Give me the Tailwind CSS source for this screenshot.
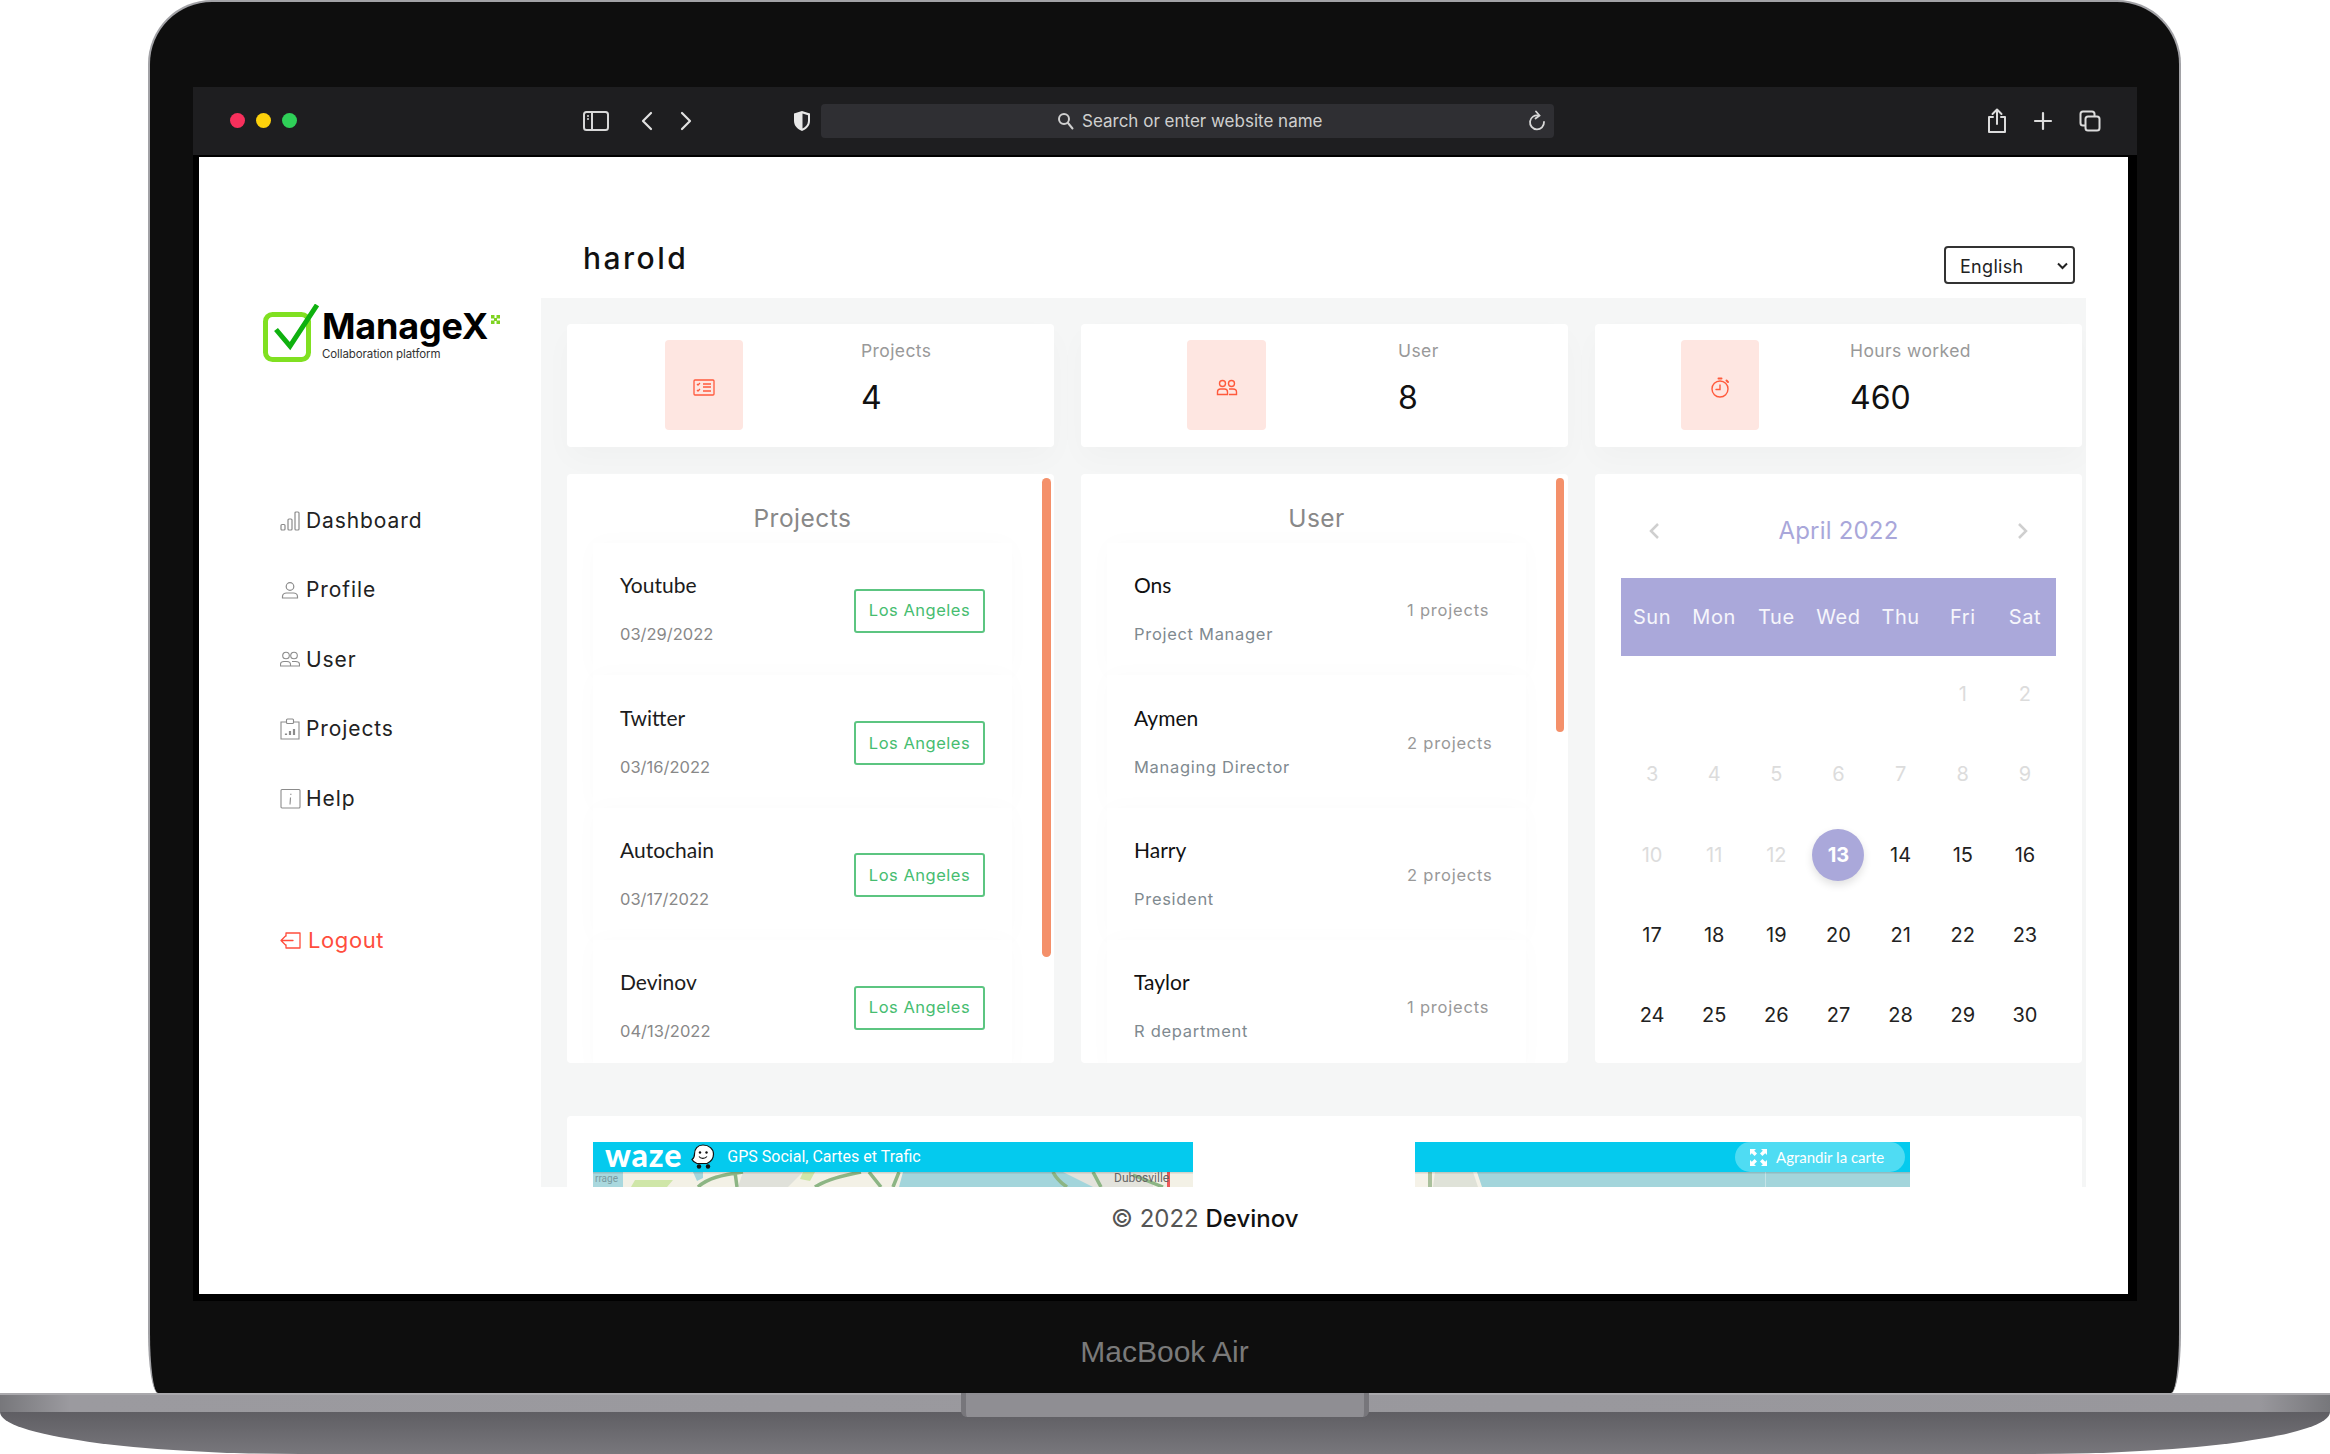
<!DOCTYPE html>
<html lang="en">
<head>
  <meta charset="UTF-8" />
  <title>ManageX</title>
  <script src="https://cdn.jsdelivr.net/npm/@tailwindcss/browser@4"></script>
</head>
<body class="w-[2330px] h-[1454px] overflow-hidden bg-white font-[family-name:Inter,sans-serif]">

  <!-- laptop lid -->
  <div class="ml-[148px] w-[2033px] h-[1393px] pt-[85px] px-[43px] bg-[#0e0e0e] border-2 border-b-0 border-[#a2a2a6] rounded-t-[64px] rounded-b-[10px_60px]">
    <div class="w-[1944px] h-[1214px] bg-black">

      <!-- browser toolbar -->
      <div class="h-[68px] bg-[#1e1e20] flex items-center relative">
        <span class="-mt-[2px] ml-[37px] w-[15px] h-[15px] rounded-full bg-[#f7305c]"></span>
        <span class="-mt-[2px] ml-[11px] w-[15px] h-[15px] rounded-full bg-[#fdd10b]"></span>
        <span class="-mt-[2px] ml-[11px] w-[15px] h-[15px] rounded-full bg-[#2fd058]"></span>

        <svg class="ml-[286px]" width="26" height="20" viewBox="0 0 26 20" fill="none" stroke="#d8d8d8" stroke-width="2"><rect x="1" y="1" width="24" height="18" rx="2.5"/><path d="M9 1v18"/><path d="M4 5h2M4 8h2" stroke-width="1.5"/></svg>
        <svg class="ml-[31px]" width="14" height="20" viewBox="0 0 14 20" fill="none" stroke="#e2e2e2" stroke-width="2.2" stroke-linecap="round" stroke-linejoin="round"><path d="M11 2 3 10l8 8"/></svg>
        <svg class="ml-[25px]" width="14" height="20" viewBox="0 0 14 20" fill="none" stroke="#e2e2e2" stroke-width="2.2" stroke-linecap="round" stroke-linejoin="round"><path d="m3 2 8 8-8 8"/></svg>
        <svg class="ml-[100px]" width="18" height="22" viewBox="0 0 18 22"><path d="M9 1 1 3.5V11c0 5 4 8.500 8 10 4-1.500 8-5 8-10V3.500z" fill="#e8e8e8"/><path d="M9.500 3.500 15 5.200V11c0 3.500-2.500 6-5.500 7.500z" fill="#26262a"/></svg>

        <div class="ml-[10px] w-[733px] h-[34px] rounded-[4px] bg-[#2f2f33] flex items-center relative">
          <svg class="ml-[236px]" width="17" height="18" viewBox="0 0 17 18" fill="none" stroke="#d0d0d0" stroke-width="2" stroke-linecap="round"><circle cx="7" cy="7" r="5"/><path d="m11 11 4.500 5.500"/></svg>
          <span class="ml-[8px] text-[17px] leading-none text-[#cfcfcf]">Search or enter website name</span>
          <svg class="absolute right-[8px] top-[6px]" width="18" height="22" viewBox="0 0 18 22" fill="none" stroke="#d8d8d8" stroke-width="1.800" stroke-linecap="round"><path d="M10.500 5.500A7 7 0 1 0 16 12"/><path d="M8 1.500l3.500 4-4 3" /></svg>
        </div>

        <svg class="ml-[433px]" width="20" height="26" viewBox="0 0 20 26" fill="none" stroke="#dcdcdc" stroke-width="2" stroke-linecap="round" stroke-linejoin="round"><path d="M6 9H2v15h16V9h-4"/><path d="M10 16V2M5.500 6 10 1.500 14.500 6"/></svg>
        <svg class="ml-[26px]" width="20" height="20" viewBox="0 0 20 20" fill="none" stroke="#dcdcdc" stroke-width="2.200" stroke-linecap="round"><path d="M10 2v16M2 10h16"/></svg>
        <svg class="ml-[26px]" width="22" height="22" viewBox="0 0 22 22" fill="none" stroke="#dcdcdc" stroke-width="2"><rect x="1.500" y="1.500" width="14" height="14" rx="2.500"/><rect x="6.500" y="6.500" width="14" height="14" rx="2.500" fill="#1e1e20"/></svg>
      </div>

      <!-- screen -->
      <div class="mt-[2px] ml-[6px] w-[1929px] h-[1137px] bg-white">
        <div class="flex h-[1030px]">

          <!-- sidebar -->
          <aside class="w-[342px] shrink-0 pt-[147px] pl-[64px]">
            <div class="flex h-[58px]">
              <svg class="shrink-0" width="56" height="58" viewBox="0 0 56 58" fill="none"><rect x="2.500" y="10.500" width="43" height="45" rx="7" stroke="#80e021" stroke-width="5"/><path d="M13 25.500 27 42 54 1" stroke="#0fb10f" stroke-width="5"/></svg>
              <div class="ml-[3px] relative">
                <div class="mt-[2px] text-[36px] leading-[40px] font-bold text-black tracking-[-0.2px]">ManageX</div>
                <div class="text-[11.500px] leading-[14px] text-[#333] tracking-[-0.1px] mt-[1px]">Collaboration platform</div>
                <svg class="absolute left-[169px] top-[11px]" width="9" height="9" viewBox="0 0 9 9" fill="#7ed321"><rect x="0" y="0" width="3.500" height="3.500"/><rect x="5.500" y="0" width="3.500" height="3.500"/><rect x="0" y="5.500" width="3.500" height="3.500"/><rect x="5.500" y="5.500" width="3.500" height="3.500"/><rect x="3" y="3" width="3" height="3"/></svg>
              </div>
            </div>

            <nav class="mt-[124px] ml-[17px] text-[21px] text-[#222] tracking-[0.9px]">
              <a class="flex items-center h-[69.400px]"><span class="w-[26px] shrink-0 flex">
                <svg width="20" height="20" viewBox="0 0 20 20" fill="none" stroke="#8b8b8b" stroke-width="1.200"><rect x="1" y="13.500" width="4" height="5.500" rx="1"/><rect x="8" y="8" width="4" height="11" rx="1"/><rect x="15" y="1" width="4" height="18" rx="1"/></svg>
              </span>Dashboard</a>
              <a class="flex items-center h-[69.400px]"><span class="w-[26px] shrink-0 flex">
                <svg width="20" height="20" viewBox="0 0 20 20" fill="none" stroke="#8b8b8b" stroke-width="1.200"><circle cx="10" cy="6.500" r="3.800"/><path d="M2.500 18v-1.500c0-2 2-3.500 4-3.500h7c2 0 4 1.500 4 3.500V18z"/></svg>
              </span>Profile</a>
              <a class="flex items-center h-[69.400px]"><span class="w-[26px] shrink-0 flex">
                <svg width="20" height="20" viewBox="0 0 20 20" fill="none" stroke="#8b8b8b" stroke-width="1.100"><circle cx="6" cy="6.500" r="3.300"/><circle cx="14" cy="6.500" r="3.300"/><path d="M.5 17v-1.500c0-2 1.500-3 3.500-3h3c2 0 3.500 1 3.500 3V17zM12 12.500h3.500c2.500 0 4 1 4 3V17H11"/></svg>
              </span>User</a>
              <a class="flex items-center h-[69.400px]"><span class="w-[26px] shrink-0 flex">
                <svg width="20" height="22" viewBox="0 0 20 22" fill="none" stroke="#8b8b8b" stroke-width="1.100"><path d="M6 4H1v17h18V4h-5"/><rect x="6.500" y="1" width="7" height="4.500" rx="1"/><path d="M6 17v-1.500M10 17v-4M14 17v-6" stroke-width="2.200"/></svg>
              </span>Projects</a>
              <a class="flex items-center h-[69.400px]"><span class="w-[26px] shrink-0 flex">
                <svg width="21" height="21" viewBox="0 0 21 21" fill="none" stroke="#8b8b8b" stroke-width="1.100"><rect x="1" y="1.500" width="19" height="18.500" rx="1"/><path d="M10.500 9.500 10 16.500" /><path d="M10.800 5.800v1" stroke-width="1.400"/></svg>
              </span>Help</a>
              <a class="flex items-center h-[69.400px] mt-[73px] text-[#ff4d3d] text-[22px] tracking-[0.6px]"><span class="w-[28px] shrink-0 flex">
                <svg width="21" height="17" viewBox="0 0 21 17" fill="none" stroke="#ff4d3d" stroke-width="1.300" stroke-linecap="round" stroke-linejoin="round"><path d="M6 4V1h14v15H6v-3"/><path d="M13 8.500H1M5.500 4 1 8.500 5.500 13"/></svg>
              </span>Logout</a>
            </nav>
          </aside>

          <!-- main column -->
          <main class="w-[1545px] shrink-0">
            <div class="h-[141px] flex justify-between">
              <h1 class="ml-[42px] mt-[81px] text-[30px] leading-[40px] font-medium text-[#111] tracking-[2.500px]">harold</h1>
              <div class="relative mt-[89px] mr-[11px] w-[131px] h-[38px]">
                <select class="appearance-none w-full h-full pl-[14px] pt-[2px] border-2 border-[#333] rounded-[4px] text-[18px] tracking-[0.3px] text-[#222] bg-white">
                  <option>English</option>
                </select>
                <svg class="absolute right-[7px] top-[16px]" width="11" height="8" viewBox="0 0 11 8" fill="none" stroke="#222" stroke-width="2"><path d="m1 1.500 4.500 4.500L10 1.500"/></svg>
              </div>
            </div>

            <section class="h-[889px] overflow-hidden bg-[#f5f6f6] pt-[26px] pl-[26px] pr-[4px]">

              <!-- stat cards -->
              <div class="grid grid-cols-3 gap-[27px] h-[123px]">
                <div class="bg-white rounded-[4px] shadow-[0_12px_30px_rgba(0,0,0,0.025)] flex pt-[16px] pl-[98px]">
                  <div class="w-[78px] h-[90px] rounded-[4px] bg-[#fee6e1] flex items-center justify-center pt-[4px]">
                    <svg width="22" height="17" viewBox="0 0 22 17" fill="none" stroke="#ff5a3c" stroke-width="1.300"><rect x="1" y="1" width="20" height="15" rx="1"/><path d="m4 5 1 1 2-2M4 11l1 1 2-2"/><path d="M10 5h8M10 8h8M10 12h8" /></svg>
                  </div>
                  <div class="ml-[118px]">
                    <div class="-mt-[1px] text-[17.500px] leading-[24px] text-[#999] tracking-[0.4px]">Projects</div>
                    <div class="mt-[15px] text-[32px] leading-[40px] text-[#111]">4</div>
                  </div>
                </div>
                <div class="bg-white rounded-[4px] shadow-[0_12px_30px_rgba(0,0,0,0.025)] flex pt-[16px] pl-[106px]">
                  <div class="w-[79px] h-[90px] rounded-[4px] bg-[#fee6e1] flex items-center justify-center pt-[4px]">
                    <svg width="22" height="17" viewBox="0 0 22 17" fill="none" stroke="#ff5a3c" stroke-width="1.400"><circle cx="6.500" cy="4.500" r="3"/><circle cx="15.500" cy="4.500" r="3"/><path d="M1.500 15.500V13c0-2 1.500-3 3-3h4c1.500 0 3 1 3 3v2.500zM13 10h4c2 0 3.500 1 3.500 3v2.500H13"/></svg>
                  </div>
                  <div class="ml-[132px]">
                    <div class="-mt-[1px] text-[17.500px] leading-[24px] text-[#999] tracking-[0.4px]">User</div>
                    <div class="mt-[15px] text-[32px] leading-[40px] text-[#111]">8</div>
                  </div>
                </div>
                <div class="bg-white rounded-[4px] shadow-[0_12px_30px_rgba(0,0,0,0.025)] flex pt-[16px] pl-[86px]">
                  <div class="w-[78px] h-[90px] rounded-[4px] bg-[#fee6e1] flex items-center justify-center pt-[5px]">
                    <svg width="20" height="21" viewBox="0 0 20 21" fill="none" stroke="#ff5a3c" stroke-width="1.400" stroke-linecap="round"><circle cx="10" cy="12" r="8"/><path d="M10 8v4.500H6"/><path d="M8.500 1.500h3" stroke-width="2"/><path d="m16.500 3.500 1.500 1.500" stroke-width="2"/></svg>
                  </div>
                  <div class="ml-[91px]">
                    <div class="-mt-[1px] text-[17.500px] leading-[24px] text-[#999] tracking-[0.4px]">Hours worked</div>
                    <div class="mt-[15px] text-[32px] leading-[40px] text-[#111]">460</div>
                  </div>
                </div>
              </div>

              <!-- panels -->
              <div class="mt-[27px] grid grid-cols-3 gap-[27px] h-[589px]">

                <!-- projects list -->
                <div class="relative bg-white rounded-[4px] overflow-hidden pl-[26px] pt-[27px]">
                  <h2 class="mt-[1px] w-[419px] text-center text-[24.500px] leading-[32px] text-[#888] tracking-[0.5px]">Projects</h2>
                  <div class="mt-[9px] w-[419px]">
                    <div class="h-[132.400px] px-[27px] bg-white shadow-[0_0_24px_rgba(0,0,0,0.02)] flex items-center justify-between">
                      <div>
                        <div class="-mt-[1px] font-[family-name:Lato,sans-serif] text-[21px] leading-[28px] text-[#1c1c1c]">Youtube</div>
                        <div class="mt-[23px] text-[16.500px] leading-[24px] text-[#888]">03/29/2022</div>
                      </div>
                      <span class="mt-[3px] w-[131px] h-[44px] flex items-center justify-center border-2 border-[#5cc581] rounded-[3px] text-[16.500px] tracking-[0.5px] text-[#46bd70]">Los Angeles</span>
                    </div>
                    <div class="h-[132.400px] px-[27px] bg-white shadow-[0_0_24px_rgba(0,0,0,0.02)] flex items-center justify-between">
                      <div>
                        <div class="-mt-[1px] font-[family-name:Lato,sans-serif] text-[21px] leading-[28px] text-[#1c1c1c]">Twitter</div>
                        <div class="mt-[23px] text-[16.500px] leading-[24px] text-[#888]">03/16/2022</div>
                      </div>
                      <span class="mt-[3px] w-[131px] h-[44px] flex items-center justify-center border-2 border-[#5cc581] rounded-[3px] text-[16.500px] tracking-[0.5px] text-[#46bd70]">Los Angeles</span>
                    </div>
                    <div class="h-[132.400px] px-[27px] bg-white shadow-[0_0_24px_rgba(0,0,0,0.02)] flex items-center justify-between">
                      <div>
                        <div class="-mt-[1px] font-[family-name:Lato,sans-serif] text-[21px] leading-[28px] text-[#1c1c1c]">Autochain</div>
                        <div class="mt-[23px] text-[16.500px] leading-[24px] text-[#888]">03/17/2022</div>
                      </div>
                      <span class="mt-[3px] w-[131px] h-[44px] flex items-center justify-center border-2 border-[#5cc581] rounded-[3px] text-[16.500px] tracking-[0.5px] text-[#46bd70]">Los Angeles</span>
                    </div>
                    <div class="h-[132.400px] px-[27px] bg-white shadow-[0_0_24px_rgba(0,0,0,0.02)] flex items-center justify-between">
                      <div>
                        <div class="-mt-[1px] font-[family-name:Lato,sans-serif] text-[21px] leading-[28px] text-[#1c1c1c]">Devinov</div>
                        <div class="mt-[23px] text-[16.500px] leading-[24px] text-[#888]">04/13/2022</div>
                      </div>
                      <span class="mt-[3px] w-[131px] h-[44px] flex items-center justify-center border-2 border-[#5cc581] rounded-[3px] text-[16.500px] tracking-[0.5px] text-[#46bd70]">Los Angeles</span>
                    </div>
                  </div>
                  <div class="absolute left-[475px] top-[4px] w-[9px] h-[479px] rounded-full bg-[#f4906a]"></div>
                </div>

                <!-- user list -->
                <div class="relative bg-white rounded-[4px] overflow-hidden pl-[26px] pt-[27px]">
                  <h2 class="mt-[1px] w-[419px] text-center text-[24.500px] leading-[32px] text-[#888] tracking-[0.5px]">User</h2>
                  <div class="mt-[9px] w-[419px]">
                    <div class="h-[132.400px] pl-[27px] bg-white shadow-[0_0_24px_rgba(0,0,0,0.02)] flex items-center">
                      <div class="w-[273px]">
                        <div class="-mt-[1px] font-[family-name:Lato,sans-serif] text-[21px] leading-[28px] text-[#111]">Ons</div>
                        <div class="mt-[23px] text-[16.500px] leading-[24px] text-[#7f8a90] tracking-[0.7px]">Project Manager</div>
                      </div>
                      <span class="mt-[3px] w-[80px] text-center whitespace-nowrap text-[16.500px] tracking-[0.8px] text-[#999]">1 projects</span>
                    </div>
                    <div class="h-[132.400px] pl-[27px] bg-white shadow-[0_0_24px_rgba(0,0,0,0.02)] flex items-center">
                      <div class="w-[273px]">
                        <div class="-mt-[1px] font-[family-name:Lato,sans-serif] text-[21px] leading-[28px] text-[#111]">Aymen</div>
                        <div class="mt-[23px] text-[16.500px] leading-[24px] text-[#7f8a90] tracking-[0.7px]">Managing Director</div>
                      </div>
                      <span class="mt-[3px] w-[80px] text-center whitespace-nowrap text-[16.500px] tracking-[0.8px] text-[#999]">2 projects</span>
                    </div>
                    <div class="h-[132.400px] pl-[27px] bg-white shadow-[0_0_24px_rgba(0,0,0,0.02)] flex items-center">
                      <div class="w-[273px]">
                        <div class="-mt-[1px] font-[family-name:Lato,sans-serif] text-[21px] leading-[28px] text-[#111]">Harry</div>
                        <div class="mt-[23px] text-[16.500px] leading-[24px] text-[#7f8a90] tracking-[0.7px]">President</div>
                      </div>
                      <span class="mt-[3px] w-[80px] text-center whitespace-nowrap text-[16.500px] tracking-[0.8px] text-[#999]">2 projects</span>
                    </div>
                    <div class="h-[132.400px] pl-[27px] bg-white shadow-[0_0_24px_rgba(0,0,0,0.02)] flex items-center">
                      <div class="w-[273px]">
                        <div class="-mt-[1px] font-[family-name:Lato,sans-serif] text-[21px] leading-[28px] text-[#111]">Taylor</div>
                        <div class="mt-[23px] text-[16.500px] leading-[24px] text-[#7f8a90] tracking-[0.7px]">R department</div>
                      </div>
                      <span class="mt-[3px] w-[80px] text-center whitespace-nowrap text-[16.500px] tracking-[0.8px] text-[#999]">1 projects</span>
                    </div>
                  </div>
                  <div class="absolute left-[475px] top-[4px] w-[8px] h-[254px] rounded-full bg-[#f4906a]"></div>
                </div>

                <!-- calendar -->
                <div class="bg-white rounded-[4px] overflow-hidden px-[26px] pt-[37px]">
                  <div class="flex items-center justify-between h-[40px] px-[27px]">
                    <svg width="12" height="18" viewBox="0 0 12 18" fill="none" stroke="#cfcfcf" stroke-width="2.500"><path d="M10 2 3 9l7 7"/></svg>
                    <span class="text-[24px] text-[#a9a7da] tracking-[0.2px]">April 2022</span>
                    <svg width="12" height="18" viewBox="0 0 12 18" fill="none" stroke="#cfcfcf" stroke-width="2.500"><path d="m2 2 7 7-7 7"/></svg>
                  </div>
                  <div class="mt-[27px] h-[78px] grid grid-cols-7 items-center text-center bg-[#aaa8da] text-white/90 text-[20px] tracking-[0.6px]">
                    <span>Sun</span><span>Mon</span><span>Tue</span><span>Wed</span><span>Thu</span><span>Fri</span><span>Sat</span>
                  </div>
                  <div class="-mt-[2px] grid grid-cols-7 auto-rows-[80.250px] items-center justify-items-center text-[20px] text-[#222]">
                    <span></span><span></span><span></span><span></span><span></span>
                    <span class="text-[#dcdcdc]">1</span><span class="text-[#dcdcdc]">2</span>
                    <span class="text-[#dcdcdc]">3</span><span class="text-[#dcdcdc]">4</span><span class="text-[#dcdcdc]">5</span><span class="text-[#dcdcdc]">6</span><span class="text-[#dcdcdc]">7</span><span class="text-[#dcdcdc]">8</span><span class="text-[#dcdcdc]">9</span>
                    <span class="text-[#dcdcdc]">10</span><span class="text-[#dcdcdc]">11</span><span class="text-[#dcdcdc]">12</span>
                    <span class="w-[52px] h-[52px] rounded-full bg-[#aaa8da] text-white font-bold flex items-center justify-center shadow-[0_4px_8px_rgba(0,0,0,0.12)]">13</span>
                    <span>14</span><span>15</span><span>16</span>
                    <span>17</span><span>18</span><span>19</span><span>20</span><span>21</span><span>22</span><span>23</span>
                    <span>24</span><span>25</span><span>26</span><span>27</span><span>28</span><span>29</span><span>30</span>
                  </div>
                </div>
              </div>

              <!-- map card, cut off by the scroll area -->
              <div class="mt-[53px] h-[120px] bg-white rounded-[4px] pt-[26px] pl-[26px] flex">
                <div class="w-[600px] h-[45px]">
                  <div class="h-[30px] bg-[#04caee] flex items-center pl-[12px] text-white">
                    <span class="font-[family-name:Lato,sans-serif] font-black text-[32px] leading-none -mt-[5px] tracking-[0.9px]">waze</span>
                    <svg class="ml-[9px]" width="24" height="28" viewBox="0 0 24 28"><path d="M12 2C6.500 2 3.500 6 3.500 11c0 3-1 4.500-2.500 5.500 1 2 3.500 3.500 5 4h10c3.500-1.500 6.500-5 6.500-9.500C22.500 6 18 2 12 2z" fill="#fff" stroke="#111" stroke-width="1.200"/><circle cx="8" cy="23.500" r="2.200" fill="#111"/><circle cx="17" cy="23.500" r="2.200" fill="#111"/><circle cx="9" cy="9.500" r="1.200" fill="#111"/><circle cx="15.500" cy="9.500" r="1.200" fill="#111"/><path d="M8 13.500c1.500 2.500 6 2.500 8 0" fill="none" stroke="#111" stroke-width="1.100"/></svg>
                    <span class="ml-[12px] font-[family-name:Roboto,sans-serif] text-[16px] leading-none">GPS Social, Cartes et Trafic</span>
                  </div>
                  <svg class="block" width="600" height="15" viewBox="0 0 600 15">
                    <rect width="600" height="15" fill="#f3f1e6"/>
                    <rect width="30" height="15" fill="#a9d8de"/>
                    <path d="M42 8h38l-6 7H38z" fill="#cfe6a8"/>
                    <path d="M100 0h10v6l-6 3z" fill="#a3d5db"/>
                    <path d="M150 0h60l-15 15h-50z" fill="#e0e1da"/>
                    <path d="M210 0h12l-5 9-10-2z" fill="#cfe6a8"/>
                    <path d="M310 0h190l6 15H306z" fill="#a3d5db"/>
                    <path d="M470 0h90v15h-60z" fill="#e3e3dc"/>
                    <path d="M105 15 C115 6 128 3 150 0M142 0l2 15M222 15c12-8 30-12 46-15M276 0l12 15M306 0l-6 15M460 0c3 6 8 11 14 15M500 0l8 15M540 3l30 12" fill="none" stroke="#8cb584" stroke-width="3.500"/>
                    <rect x="574" y="0" width="3" height="15" fill="#ee5a5a"/>
                    <rect width="600" height="1.500" fill="#000" opacity=".12"/>
                    <text x="2" y="10" font-family="Roboto" font-size="10" fill="#7a9aa0">rrage</text>
                    <text x="521" y="10" font-family="Roboto" font-size="12" fill="#666">Dubosville</text>
                  </svg>
                </div>
                <div class="ml-[222px] w-[495px] h-[45px]">
                  <div class="h-[30px] bg-[#04caee] flex justify-end pr-[5px] text-white">
                    <span class="w-[170px] h-[30px] rounded-full bg-[#4fdcf3] flex items-center pl-[15px] font-[family-name:Lato,sans-serif] text-[15px]">
                      <svg class="mr-[9px]" width="17" height="17" viewBox="0 0 17 17" fill="#fff"><path d="M0 0h6L4.200 1.800 7 4.600 4.600 7 1.800 4.200 0 6zM17 0v6l-1.800-1.800L12.400 7 10 4.600l2.800-2.800L11 0zM0 17v-6l1.800 1.800L4.600 10 7 12.400l-2.800 2.800L6 17zM17 17h-6l1.800-1.800L10 12.400l2.400-2.400 2.800 2.800L17 11z"/></svg>
                      Agrandir la carte
                    </span>
                  </div>
                  <svg class="block" width="495" height="15" viewBox="0 0 495 15">
                    <rect width="495" height="15" fill="#a3d5db"/>
                    <path d="M0 0h62l5 15H0z" fill="#f5f2e8"/>
                    <path d="M20 0h38l5 15H18z" fill="#dfe2d8"/>
                    <rect x="13" width="4" height="15" fill="#a9c09c"/>
                    <rect x="350" width="1" height="15" fill="#c5e3e7"/>
                    <rect width="495" height="1.500" fill="#000" opacity=".12"/>
                  </svg>
                </div>
              </div>
            </section>
          </main>
        </div>

        <footer class="h-[107px] pl-[912px] pt-[16px] text-[24px] leading-[32px] text-[#555]">
          © 2022 <span class="text-[#111] font-medium">Devinov</span>
        </footer>
      </div>
    </div>

    <div class="mt-[31px] text-center text-[30px] leading-[40px] text-[#7a7a7a] font-[family-name:'Liberation_Sans',sans-serif]">MacBook Air</div>
  </div>

  <!-- laptop base -->
  <div class="relative w-[2330px] h-[61px]">
    <div class="h-[19px] bg-[linear-gradient(90deg,#77777b,#9b9a9f_3%,#98979c_97%,#77777b)] border-t-2 border-[#aaa9ad]"></div>
    <div class="h-[42px] rounded-b-[300px_42px] bg-[linear-gradient(180deg,#5f5e63,#78777c)]"></div>
    <div class="absolute left-[961px] top-0 w-[408px] h-[24px] rounded-b-[6px] bg-[#8f8e93] border-x-[5px] border-[#77767b]"></div>
  </div>

</body>
</html>
